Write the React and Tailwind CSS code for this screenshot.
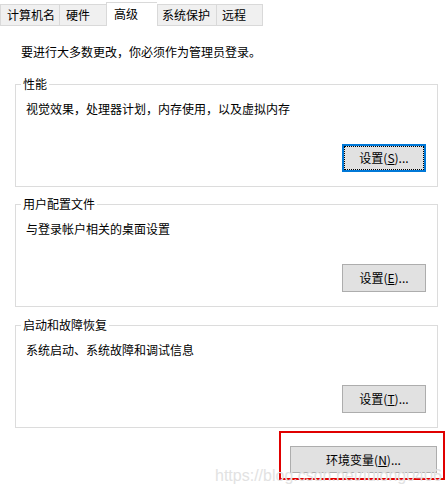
export default function App() {
  const font = { fontFamily: '"Noto Sans CJK SC", "Microsoft YaHei", sans-serif' };
  const tabs = [
    { label: "计算机名", w: "w-[59px]", pl: "pl-[6px]" },
    { label: "硬件", w: "w-[47px]", pl: "pl-[6px]" },
    { label: "高级", w: "w-[51px]", pl: "pl-[7px]", active: true },
    { label: "系统保护", w: "w-[59px]", pl: "pl-[4px]" },
    { label: "远程", w: "w-[47px]", pl: "pl-[5px]", last: true },
  ];

  const Button = ({ children, focused, className = "" }) => (
    <div
      className={
        "h-[28px] w-[84px] flex items-center justify-center bg-[#e1e1e1] text-[12px] leading-[16px] text-black " +
        (focused ? "border-2 border-[#0078d7] " : "border border-[#adadad] ") +
        className
      }
    >
      {focused ? (
        <div className="w-full h-full border border-dotted border-black flex items-center justify-center">
          {children}
        </div>
      ) : (
        children
      )}
    </div>
  );

  const Group = ({ title, text, btn, focused, className = "" }) => (
    <div className={"relative h-[103px] w-[423px] border border-[#dcdcdc] flex flex-col " + className}>
      <div className="absolute left-[5px] -top-[9px] bg-white px-[2px] text-[12px] leading-[16px] text-black">
        {title}
      </div>
      <div className="pl-[10px] pt-[16px] text-[12px] leading-[16px] text-black">{text}</div>
      <div className="flex justify-end pr-[11px] mt-[27px]">
        <Button focused={focused}>{btn}</Button>
      </div>
    </div>
  );

  return (
    <div className="relative w-[448px] h-[496px] bg-white overflow-hidden" style={font}>
      <div className="flex items-end h-[26px]">
        {tabs.map((t) =>
          t.active ? (
            <div
              key={t.label}
              className={`${t.w} ${t.pl} h-[24px] flex items-center bg-white border-t border-l border-[#d9d9d9] text-[12px] leading-[16px] text-black pb-[1px]`}
            >
              {t.label}
            </div>
          ) : (
            <div
              key={t.label}
              className={`${t.w} ${t.pl} h-[22px] flex items-center bg-[#f0f0f0] border-t border-l border-b border-[#d9d9d9] ${
                t.last ? "border-r" : ""
              } text-[12px] leading-[16px] text-black`}
            >
              {t.label}
            </div>
          )
        )}
      </div>

      <div className="pl-[21px] mt-[18px] text-[12px] leading-[16px] text-black">
        要进行大多数更改，你必须作为管理员登录。
      </div>

      <div className="pl-[15px] flex flex-col">
        <Group
          className="mt-[24px]"
          title="性能"
          text="视觉效果，处理器计划，内存使用，以及虚拟内存"
          focused
          btn={
            <span>
              设置(<u>S</u>)...
            </span>
          }
        />
        <Group
          className="mt-[17px]"
          title="用户配置文件"
          text="与登录帐户相关的桌面设置"
          btn={
            <span>
              设置(<u>E</u>)...
            </span>
          }
        />
        <Group
          className="mt-[18px]"
          title="启动和故障恢复"
          text="系统启动、系统故障和调试信息"
          btn={
            <span>
              设置(<u>T</u>)...
            </span>
          }
        />
      </div>

      <div className="ml-[279px] mt-[3px] w-[166px] h-[49px] border-2 border-[#e00000] flex flex-col">
        <div className="ml-[9px] mt-[13px] h-[27px] w-[147px] flex items-center justify-center bg-[#e1e1e1] border border-[#adadad] text-[12px] leading-[16px] text-black">
          <span>
            环境变量(<u>N</u>)...
          </span>
        </div>
      </div>

      <div
        className="absolute left-[215px] top-[467px] text-[16px] leading-[18px] text-[#e2e2e2] whitespace-nowrap"
        style={{ fontFamily: '"Liberation Sans", Arial, sans-serif' }}
      >
        https://blog.csdn.net/fulong0406
      </div>
    </div>
  );
}
